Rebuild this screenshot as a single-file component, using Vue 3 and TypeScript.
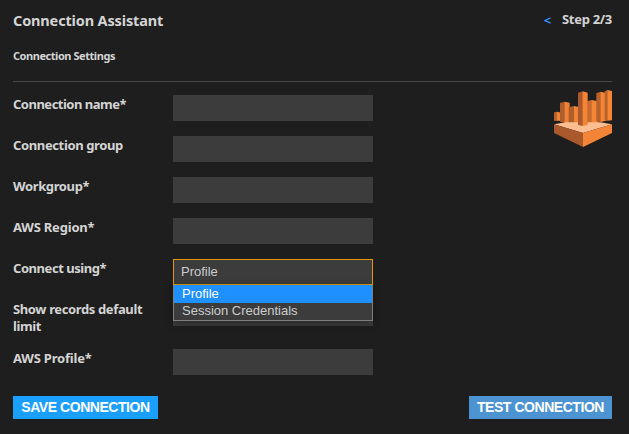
<script setup lang="ts">
import { ref } from 'vue'

interface Field {
  id: string
  label: string
  tall?: boolean
  select?: boolean
}

const fields: Field[] = [
  { id: 'name', label: 'Connection name*' },
  { id: 'group', label: 'Connection group' },
  { id: 'workgroup', label: 'Workgroup*' },
  { id: 'region', label: 'AWS Region*' },
  { id: 'using', label: 'Connect using*', select: true },
  { id: 'limit', label: 'Show records default limit', tall: true },
  { id: 'profile', label: 'AWS Profile*' },
]
const options = ['Profile', 'Session Credentials']
const selected = ref('Profile')
</script>

<template>
  <main class="assistant">
    <header class="header">
      <h1 class="title">Connection Assistant</h1>
      <div class="step"><a class="back">&lt;</a><span>Step 2/3</span></div>
    </header>
    <h2 class="subtitle">Connection Settings</h2>
    <section class="body">
      <div class="form">
        <div v-for="f in fields" :key="f.id" class="row" :class="{ tall: f.tall }">
          <label class="label" :class="f.id">{{ f.label }}</label>
          <div v-if="f.select" class="select">
            <div class="value">{{ selected }}</div>
            <ul class="menu">
              <li
                v-for="o in options"
                :key="o"
                class="option"
                :class="{ active: o === selected }"
                @click="selected = o"
              >{{ o }}</li>
            </ul>
          </div>
          <input v-else class="input" type="text" />
        </div>
      </div>
      <svg class="logo" viewBox="27 30 174 171" aria-hidden="true">
        <path fill="#b8622d" d="M27 97l10-2v28l-10-1z" />
        <path fill="#f08235" d="M36 95l13 3v25l-13-1z" />
        <path fill="#b05d2c" d="M45 68l15-3v63l-15-3z" />
        <path fill="#f08235" d="M59 65l15 3v62l-15 2z" />
        <path fill="#b05d2c" d="M71 81l17-3v56l-17-4z" />
        <path fill="#f08235" d="M87 78l15 3v54l-15 2z" />
        <path fill="#c66a2f" d="M127 63l14-3v73l-14-3z" />
        <path fill="#f58536" d="M140 60l19 4v68l-19 3z" />
        <path fill="#b8622d" d="M154 39l14-4v92l-14-3z" />
        <path fill="#f58536" d="M167 35l17 4v83l-17 4z" />
        <path fill="#b8622d" d="M179 34l9-4v92l-9-1z" />
        <path fill="#f58536" d="M187 30l14 3v88l-14 1z" />
        <path fill="#fcbd91" d="M27 133L62 127h104l35 6-87 26z" />
        <path fill="#a9592b" d="M99 38l15-4v104l-15-3z" />
        <path fill="#f58536" d="M113 34l15 4v97l-15 3z" />
        <path fill="#a9592b" d="M27 133l87 26v42l-87-42z" />
        <path fill="#f58536" d="M114 159l87-26v26l-87 42z" />
      </svg>
    </section>
    <footer class="footer">
      <button class="btn save">SAVE CONNECTION</button>
      <button class="btn test">TEST CONNECTION</button>
    </footer>
  </main>
</template>

<style>
body {
  background: #1e1e1e;
}
</style>

<style scoped>
.assistant {
  box-sizing: border-box;
  width: 629px;
  height: 434px;
  padding: 0 17px 0 13px;
  background: #1e1e1e;
  color: #d4d4d4;
  font-family: "Noto Sans", "Open Sans", sans-serif;
  font-weight: 700;
  overflow: hidden;
}
.header {
  display: flex;
  justify-content: space-between;
  height: 41px;
}
.title {
  margin: 10px 0 0;
  font-size: 14.5px;
  line-height: 20px;
  letter-spacing: -0.15px;
}
.step {
  display: flex;
  gap: 11px;
  margin-top: 10px;
  font-size: 13px;
  line-height: 18px;
  letter-spacing: -0.3px;
}
.back {
  color: #3794ff;
  font-size: 13px;
  line-height: 20px;
}
.subtitle {
  box-sizing: border-box;
  height: 41px;
  margin: 0;
  padding-top: 7px;
  border-bottom: 1px solid #484848;
  font-size: 11px;
  line-height: 16px;
  letter-spacing: -0.45px;
}
.body {
  display: flex;
  justify-content: space-between;
  align-items: flex-start;
  height: 314px;
}
.form {
  padding-top: 13px;
}
.row {
  display: flex;
  height: 41px;
}
.row.tall {
  height: 49px;
}
.label {
  box-sizing: border-box;
  width: 160px;
  padding: 1px 20px 0 0;
  font-size: 13px;
  line-height: 17px;
  letter-spacing: -0.37px;
}
.label.name {
  letter-spacing: -0.5px;
}
.label.using {
  letter-spacing: -0.45px;
}
.label.region,
.label.profile {
  letter-spacing: -0.2px;
}
.input,
.select {
  box-sizing: border-box;
  width: 200px;
  height: 26px;
  margin: 0;
  padding: 0 7px;
  border: 0;
  border-radius: 0;
  background: #3c3c3c;
}
.select {
  position: relative;
  border: 1px solid #e39800;
  font: 400 13px/23px "Liberation Sans", sans-serif;
  color: #ccc;
}
.menu {
  position: absolute;
  z-index: 1;
  top: 25px;
  left: -1px;
  box-sizing: border-box;
  width: 200px;
  height: 36px;
  margin: 0;
  padding: 0;
  border: 1px solid #808080;
  border-top: 0;
  background: #3c3c3c;
  box-shadow: 0 2px 8px rgba(0, 0, 0, 0.36);
  list-style: none;
}
.option {
  height: 17px;
  padding-left: 8px;
  line-height: 16px;
}
.option.active {
  height: 18px;
  line-height: 18px;
  background: #1e90ff;
  color: #fff;
}
.logo {
  width: 58px;
  height: 57px;
  margin-top: 8px;
}
.footer {
  display: flex;
  justify-content: space-between;
}
.btn {
  height: 23px;
  padding: 0;
  border: 0;
  color: #fff;
  font: 700 14px/23px "Liberation Sans", sans-serif;
  letter-spacing: -0.45px;
}
.save {
  width: 145px;
  background: #1a9fff;
}
.test {
  width: 143px;
  background: #4c94d1;
}
</style>
